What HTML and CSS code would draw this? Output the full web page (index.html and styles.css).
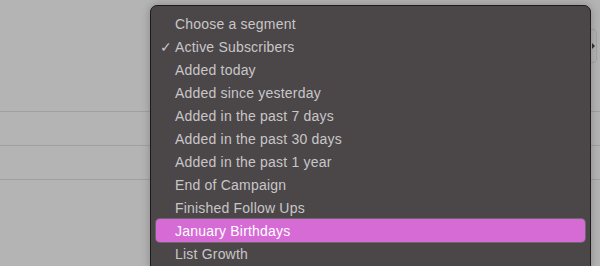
FILE: index.html
```html
<!DOCTYPE html>
<html lang="en">
<head>
    <meta charset="UTF-8">
    <title>Segments</title>
    <link rel="stylesheet" href="styles.css">
</head>
<body>
    <div class="page">
        <div class="toolbar">
            <div class="select-box"><span class="arrow"></span></div>
        </div>
        <div class="rows">
            <div class="row"></div>
            <div class="row"></div>
            <div class="row"></div>
        </div>
    </div>

    <ul class="menu">
        <li class="item">Choose a segment</li>
        <li class="item checked">Active Subscribers</li>
        <li class="item">Added today</li>
        <li class="item">Added since yesterday</li>
        <li class="item">Added in the past 7 days</li>
        <li class="item">Added in the past 30 days</li>
        <li class="item">Added in the past 1 year</li>
        <li class="item">End of Campaign</li>
        <li class="item">Finished Follow Ups</li>
        <li class="item active">January Birthdays</li>
        <li class="item">List Growth</li>
    </ul>
</body>
</html>
```

FILE: styles.css
```css
body {
    margin: 0;
    background: #b4b4b4;
    font-family: "Liberation Sans", Arial, sans-serif;
    height: 266px;
    overflow: hidden;
}
.page {
    padding-top: 29px;
}
.toolbar {
    display: flex;
    justify-content: flex-end;
    padding-right: 3px;
    height: 49px;
}
.select-box {
    width: 40px;
    height: 32px;
    border: 1px solid #a3a3a6;
    border-radius: 4px;
    display: flex;
    align-items: center;
}
.arrow {
    width: 0;
    height: 0;
    margin-left: 36px;
    border-top: 3px solid transparent;
    border-bottom: 3px solid transparent;
    border-left: 3px solid #333;
}
.rows {
    padding-top: 33px;
}
.row {
    height: 33px;
    border-top: 1px solid #a09fa8;
}
.menu {
    position: absolute;
    left: 150px;
    top: 5px;
    width: 429px;
    margin: 0;
    padding: 6px 5px;
    list-style: none;
    background: #4b4749;
    border: 1px solid #1e1c1d;
    border-radius: 7px;
    box-shadow: 0 0 10px rgba(0, 0, 0, 0.25);
}
.item {
    position: relative;
    height: 23px;
    line-height: 24px;
    padding-left: 19px;
    font-size: 14px;
    letter-spacing: 0.2px;
    color: #c8c6c7;
    border-radius: 4px;
}
.checked::before {
    content: "\2713";
    position: absolute;
    left: 4px;
    color: #c8c6c7;
}
.active {
    background: #d66bd6;
    color: #ffffff;
    box-shadow: 0 0 0 1px #6c686a;
}
```
